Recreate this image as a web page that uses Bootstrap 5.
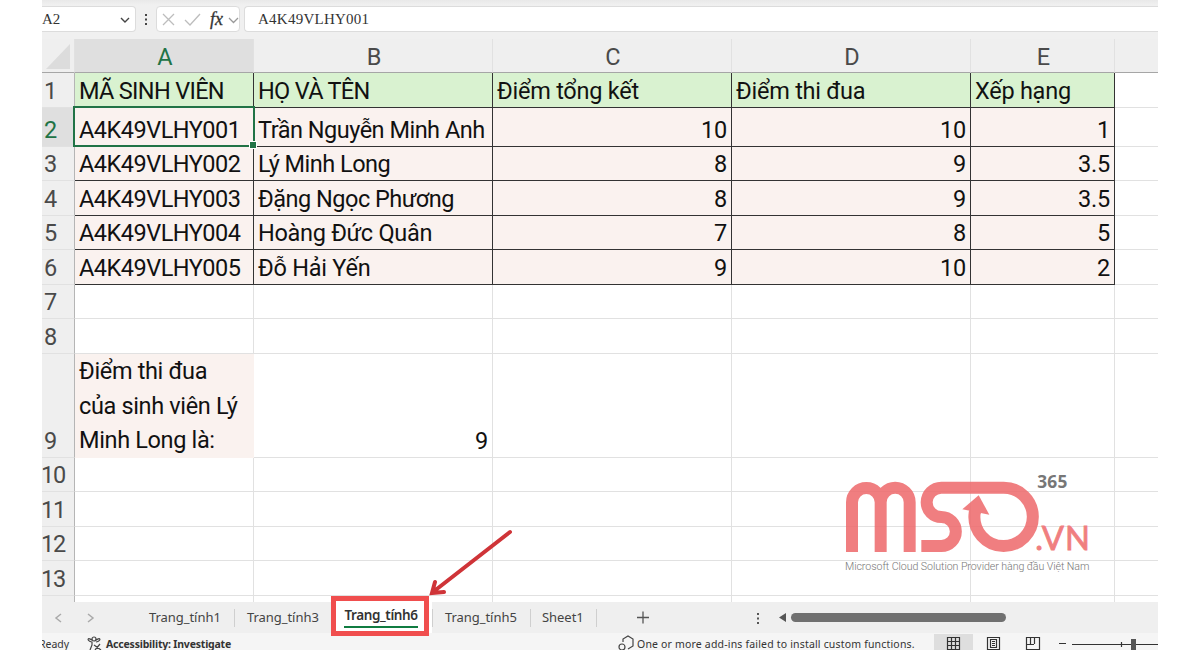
<!DOCTYPE html>
<html lang="vi">
<head>
<meta charset="utf-8">
<title>Trang_tính6</title>
<link href="https://cdn.jsdelivr.net/npm/bootstrap@5.3.0/dist/css/bootstrap.min.css" rel="stylesheet">
<script src="https://cdn.jsdelivr.net/npm/bootstrap@5.3.0/dist/js/bootstrap.bundle.min.js"></script>
<style>
body{background:#fff;font-family:"Noto Sans",sans-serif;overflow:hidden}
.book{width:1116px;height:650px;margin-left:42px;background:#efefef}
.fbar{height:39px;padding-top:6px;background:linear-gradient(#e9e9e9,#f0f0f0 5px);font:15px/26px "Liberation Serif",serif;color:#333}
.fbox{height:26px;background:#fff;border:1px solid #dcdcdc;border-radius:4px;line-height:25px}
.name-box{width:94px;border-left:0;border-radius:0 4px 4px 0}
.sheet{display:grid;grid-template-columns:33px 179px 239px 239px 239px 144px 43px;grid-template-rows:34px 35px 39px 34px 35px 34px 35px 34px 35px 104px 34px 35px 34px 35px 6px;background:#fff;font:23.5px/32px Roboto,sans-serif;color:#111;height:563px;overflow:hidden}
.sheet>div{border-right:1px solid #e1e1e1;border-bottom:1px solid #e1e1e1;padding:0 4px;display:flex;align-items:flex-end;white-space:nowrap;overflow:hidden}
.sheet>.ch{background:#efefef;color:#4a4a4a;justify-content:center;border-bottom-color:#a6a6a6;line-height:29px;padding-left:6px}
.sheet>.rh{background:#efefef;color:#4a4a4a;border-right-color:#b5b5b5;padding:0 0 0 2px}
.sheet>.rt{padding:0;letter-spacing:-1.3px;text-indent:-1px}
.sheet>.on{background:#dfdfdf;color:#217346}
.sheet>.hd{background:#d9f2d0;border-color:#333;letter-spacing:-.25px}
.sheet>.caps{letter-spacing:-.68px}
.sheet>.dt{background:#faf2ef;border-color:#333;letter-spacing:-.5px}
.sheet>.num{justify-content:flex-end;letter-spacing:-.2px}
.sheet>.last{border-right:0}
.sheet>.wrap9{background:#faf2ef;border-color:#faf2ef;line-height:34.6px;letter-spacing:-.35px}
.wrap9 span{margin-bottom:-1px}
.picked{left:73px;top:106px;width:182px;height:41px;border:2px solid #217346}
.picked::after{content:"";position:absolute;right:-3px;bottom:-3px;width:6px;height:6px;background:#217346;outline:1px solid #fff}
.tabs{height:31px;font-size:13px;letter-spacing:-.05px;color:#444}
.tabs .sep{width:1px;height:18px;background:#cfcfcf}
.tabs .pick{width:98px;height:31px;background:#fff;font-weight:600;color:#333;font-size:13.500px;letter-spacing:-.4px}
.tabs .pick span{line-height:18px;height:22px;border-bottom:2px solid #107c41}
.scroller{height:9px;width:215px;border-radius:5px;background:#707070}
.status{height:17px;background:#f5f5f5;font-size:10.5px;line-height:23px;color:#333;overflow:hidden}
.frame{left:331px;top:596px;width:98px;height:40px;border:5px solid #f04e4e}
</style>
</head>
<body>
<div class="book d-flex flex-column overflow-hidden">
  <div class="fbar d-flex flex-shrink-0">
    <div class="fbox name-box d-flex justify-content-between align-items-center pe-1"><span>A2</span><svg width="12" height="12" fill="none" stroke="#444" stroke-width="1.4"><path d="M2 5l4 4 4-4"/></svg></div>
    <svg width="20" height="26" fill="#444"><path d="M9 8h2v2H9zM9 12.500h2v2H9zM9 17h2v2H9z"/></svg>
    <div class="fbox" style="width:84px"><svg class="d-block" width="82" height="24" fill="none" stroke="#bdbdbd" stroke-width="1.3"><path d="M6 7l11 11M17 7L6 18M28 13l5 5L43 7"/><path d="M72 11l4.500 4.500L81 11" stroke="#999"/><text x="53" y="18" font-size="18" font-style="italic" fill="#333" stroke="#333" stroke-width=".3" font-family="Liberation Serif">fx</text></svg></div>
    <div class="fbox ms-1 flex-grow-1 border-end-0 rounded-end-0" style="padding-left:13px;letter-spacing:.25px">A4K49VLHY001</div>
  </div>
  <div class="sheet flex-shrink-0">
    <div class="ch p-0 justify-content-end"><svg width="32" height="33"><path d="M4 30L28 5v25z" fill="#dcdcdc"/></svg></div><div class="ch on">A</div><div class="ch">B</div><div class="ch">C</div><div class="ch">D</div><div class="ch">E</div><div class="ch border-end-0"></div>
    <div class="rh">1</div><div class="hd caps">MÃ SINH VIÊN</div><div class="hd caps">HỌ VÀ TÊN</div><div class="hd">Điểm tổng kết</div><div class="hd">Điểm thi đua</div><div class="hd">Xếp hạng</div><div class="last"></div>
    <div class="rh on">2</div><div class="dt">A4K49VLHY001</div><div class="dt">Trần Nguyễn Minh Anh</div><div class="dt num">10</div><div class="dt num">10</div><div class="dt num">1</div><div class="last"></div>
    <div class="rh">3</div><div class="dt">A4K49VLHY002</div><div class="dt">Lý Minh Long</div><div class="dt num">8</div><div class="dt num">9</div><div class="dt num">3.5</div><div class="last"></div>
    <div class="rh">4</div><div class="dt">A4K49VLHY003</div><div class="dt">Đặng Ngọc Phương</div><div class="dt num">8</div><div class="dt num">9</div><div class="dt num">3.5</div><div class="last"></div>
    <div class="rh">5</div><div class="dt">A4K49VLHY004</div><div class="dt" style="letter-spacing:-.3px">Hoàng Đức Quân</div><div class="dt num">7</div><div class="dt num">8</div><div class="dt num">5</div><div class="last"></div>
    <div class="rh">6</div><div class="dt">A4K49VLHY005</div><div class="dt" style="letter-spacing:-.25px">Đỗ Hải Yến</div><div class="dt num">9</div><div class="dt num">10</div><div class="dt num">2</div><div class="last"></div>
    <div class="rh">7</div><div></div><div></div><div></div><div></div><div></div><div class="last"></div>
    <div class="rh">8</div><div></div><div></div><div></div><div></div><div></div><div class="last"></div>
    <div class="rh">9</div><div class="wrap9"><span>Điểm thi đua<br>của sinh viên Lý<br>Minh Long là:</span></div><div class="num">9</div><div></div><div></div><div></div><div class="last"></div>
    <div class="rh rt">10</div><div></div><div></div><div></div><div></div><div></div><div class="last"></div>
    <div class="rh rt">11</div><div></div><div></div><div></div><div></div><div></div><div class="last"></div>
    <div class="rh rt">12</div><div></div><div></div><div></div><div></div><div></div><div class="last"></div>
    <div class="rh rt">13</div><div></div><div></div><div></div><div></div><div></div><div class="last"></div>
    <div class="rh border-bottom-0"></div><div class="border-bottom-0"></div><div class="border-bottom-0"></div><div class="border-bottom-0"></div><div class="border-bottom-0"></div><div class="border-bottom-0"></div><div class="last border-bottom-0"></div>
  </div>
  <div class="tabs d-flex align-items-center flex-shrink-0">
    <svg width="107" height="30" fill="none" stroke="#aaa" stroke-width="1.500"><path d="M19 11l-5 4 5 4M46 11l5 4-5 4"/></svg>
    <span style="width:85px">Trang_tính1</span><span class="sep"></span>
    <span style="width:99px;padding-left:12px">Trang_tính3</span>
    <div class="pick d-flex justify-content-center pt-1 pe-1"><span>Trang_tính6</span></div><span class="sep"></span>
    <span style="width:97px;padding-left:12px">Trang_tính5</span><span class="sep"></span>
    <span style="width:65px;padding-left:11px">Sheet1</span><span class="sep"></span>
    <svg width="194" height="30"><path d="M40 14.500h12M46 8.500v12" stroke="#555" stroke-width="1.300"/><path d="M160 10h2v2h-2zM160 14.500h2v2h-2zM160 19h2v2h-2zM189 10v9l-7-4.500z" fill="#555"/></svg>
    <span class="scroller"></span>
  </div>
  <div class="status d-flex flex-shrink-0">
    <span style="width:45px;margin-left:-3px">Ready</span>
    <svg width="22" height="17" fill="none" stroke="#444" stroke-width="1.200"><circle cx="10" cy="6" r="2"/><path d="M4 6c0 2 3 3 4 3v3l-2 5M16 6c0 2-3 3-4 3M4 6c1-1 2 0 4 1M16 6c-1-1-2 0-4 1M10 12l7 5M16 11l-5 6"/></svg>
    <span class="fw-bold" style="width:512px;letter-spacing:-.2px">Accessibility: Investigate</span>
    <svg width="19" height="17" fill="none" stroke="#444" stroke-width="1.200"><path d="M5 9V6l5-3 5 3v7l-5 3"/><circle cx="4" cy="14" r="3"/></svg>
    <span style="width:297px;letter-spacing:.18px">One or more add-ins failed to install custom functions.</span>
    <svg width="224" height="17" fill="none" stroke="#333" stroke-width="1.200"><path d="M0 1h39v16H0z" fill="#dedede" stroke="none"/><path d="M13.500 4.500h12v12h-12zM17.500 4v13M21.500 4v13M13 8.500h13M13 12.500h13M53.500 4.500h12v12h-12zM56.500 6.500h6v8h-6zM58 8.500h3M58 10.500h3M58 12.500h3M92.500 4.500h13v12h-13zM92 11.500h8M96.500 4v7M100.500 4v7M125 10.500h7M138 11.500h86M187.500 9v5"/><path d="M197 6h5v11h-5z" fill="#555" stroke="none"/></svg>
  </div>
</div>
<div class="picked position-absolute"></div>
<svg class="position-absolute" style="left:830px;top:465px" width="280" height="115" viewBox="0 0 840 345">
  <g opacity=".86"><path fill="none" stroke="#ee6a6c" stroke-width="36" d="M66 261V112a43 43 0 0 1 86 0V261M152 112a43 43 0 0 1 87 0V261M274 243H334a43.500 43.500 0 0 0 0-87a44 44 0 0 1 0-88H521a87.500 87.500 0 0 1 0 175a87.500 87.500 0 0 1-87-99L439 130"/>
  <path d="M446 91L397 133L478 149z" fill="#ee6a6c"/></g>
  <g font-family="Lato,sans-serif" fill="#f07e80" stroke="#f07e80" stroke-width="2.500"><text x="616" y="256" font-size="98" textLength="164">.VN</text></g>
  <text x="622" y="69" font-family="Open Sans,sans-serif" font-weight="700" font-size="52" fill="#777" textLength="90">365</text>
  <text x="45" y="314" font-family="Roboto,sans-serif" font-weight="300" font-size="32" fill="#777" textLength="733">Microsoft Cloud Solution Provider hàng đầu Việt Nam</text>
</svg>
<div class="frame position-absolute"></div>
<svg class="position-absolute" style="left:420px;top:520px" width="100" height="80" fill="none" stroke="#cf3438" stroke-width="4"><path d="M90 12L13 72M15 62L12 73L24 72" stroke-linecap="round"/></svg>
</body>
</html>
